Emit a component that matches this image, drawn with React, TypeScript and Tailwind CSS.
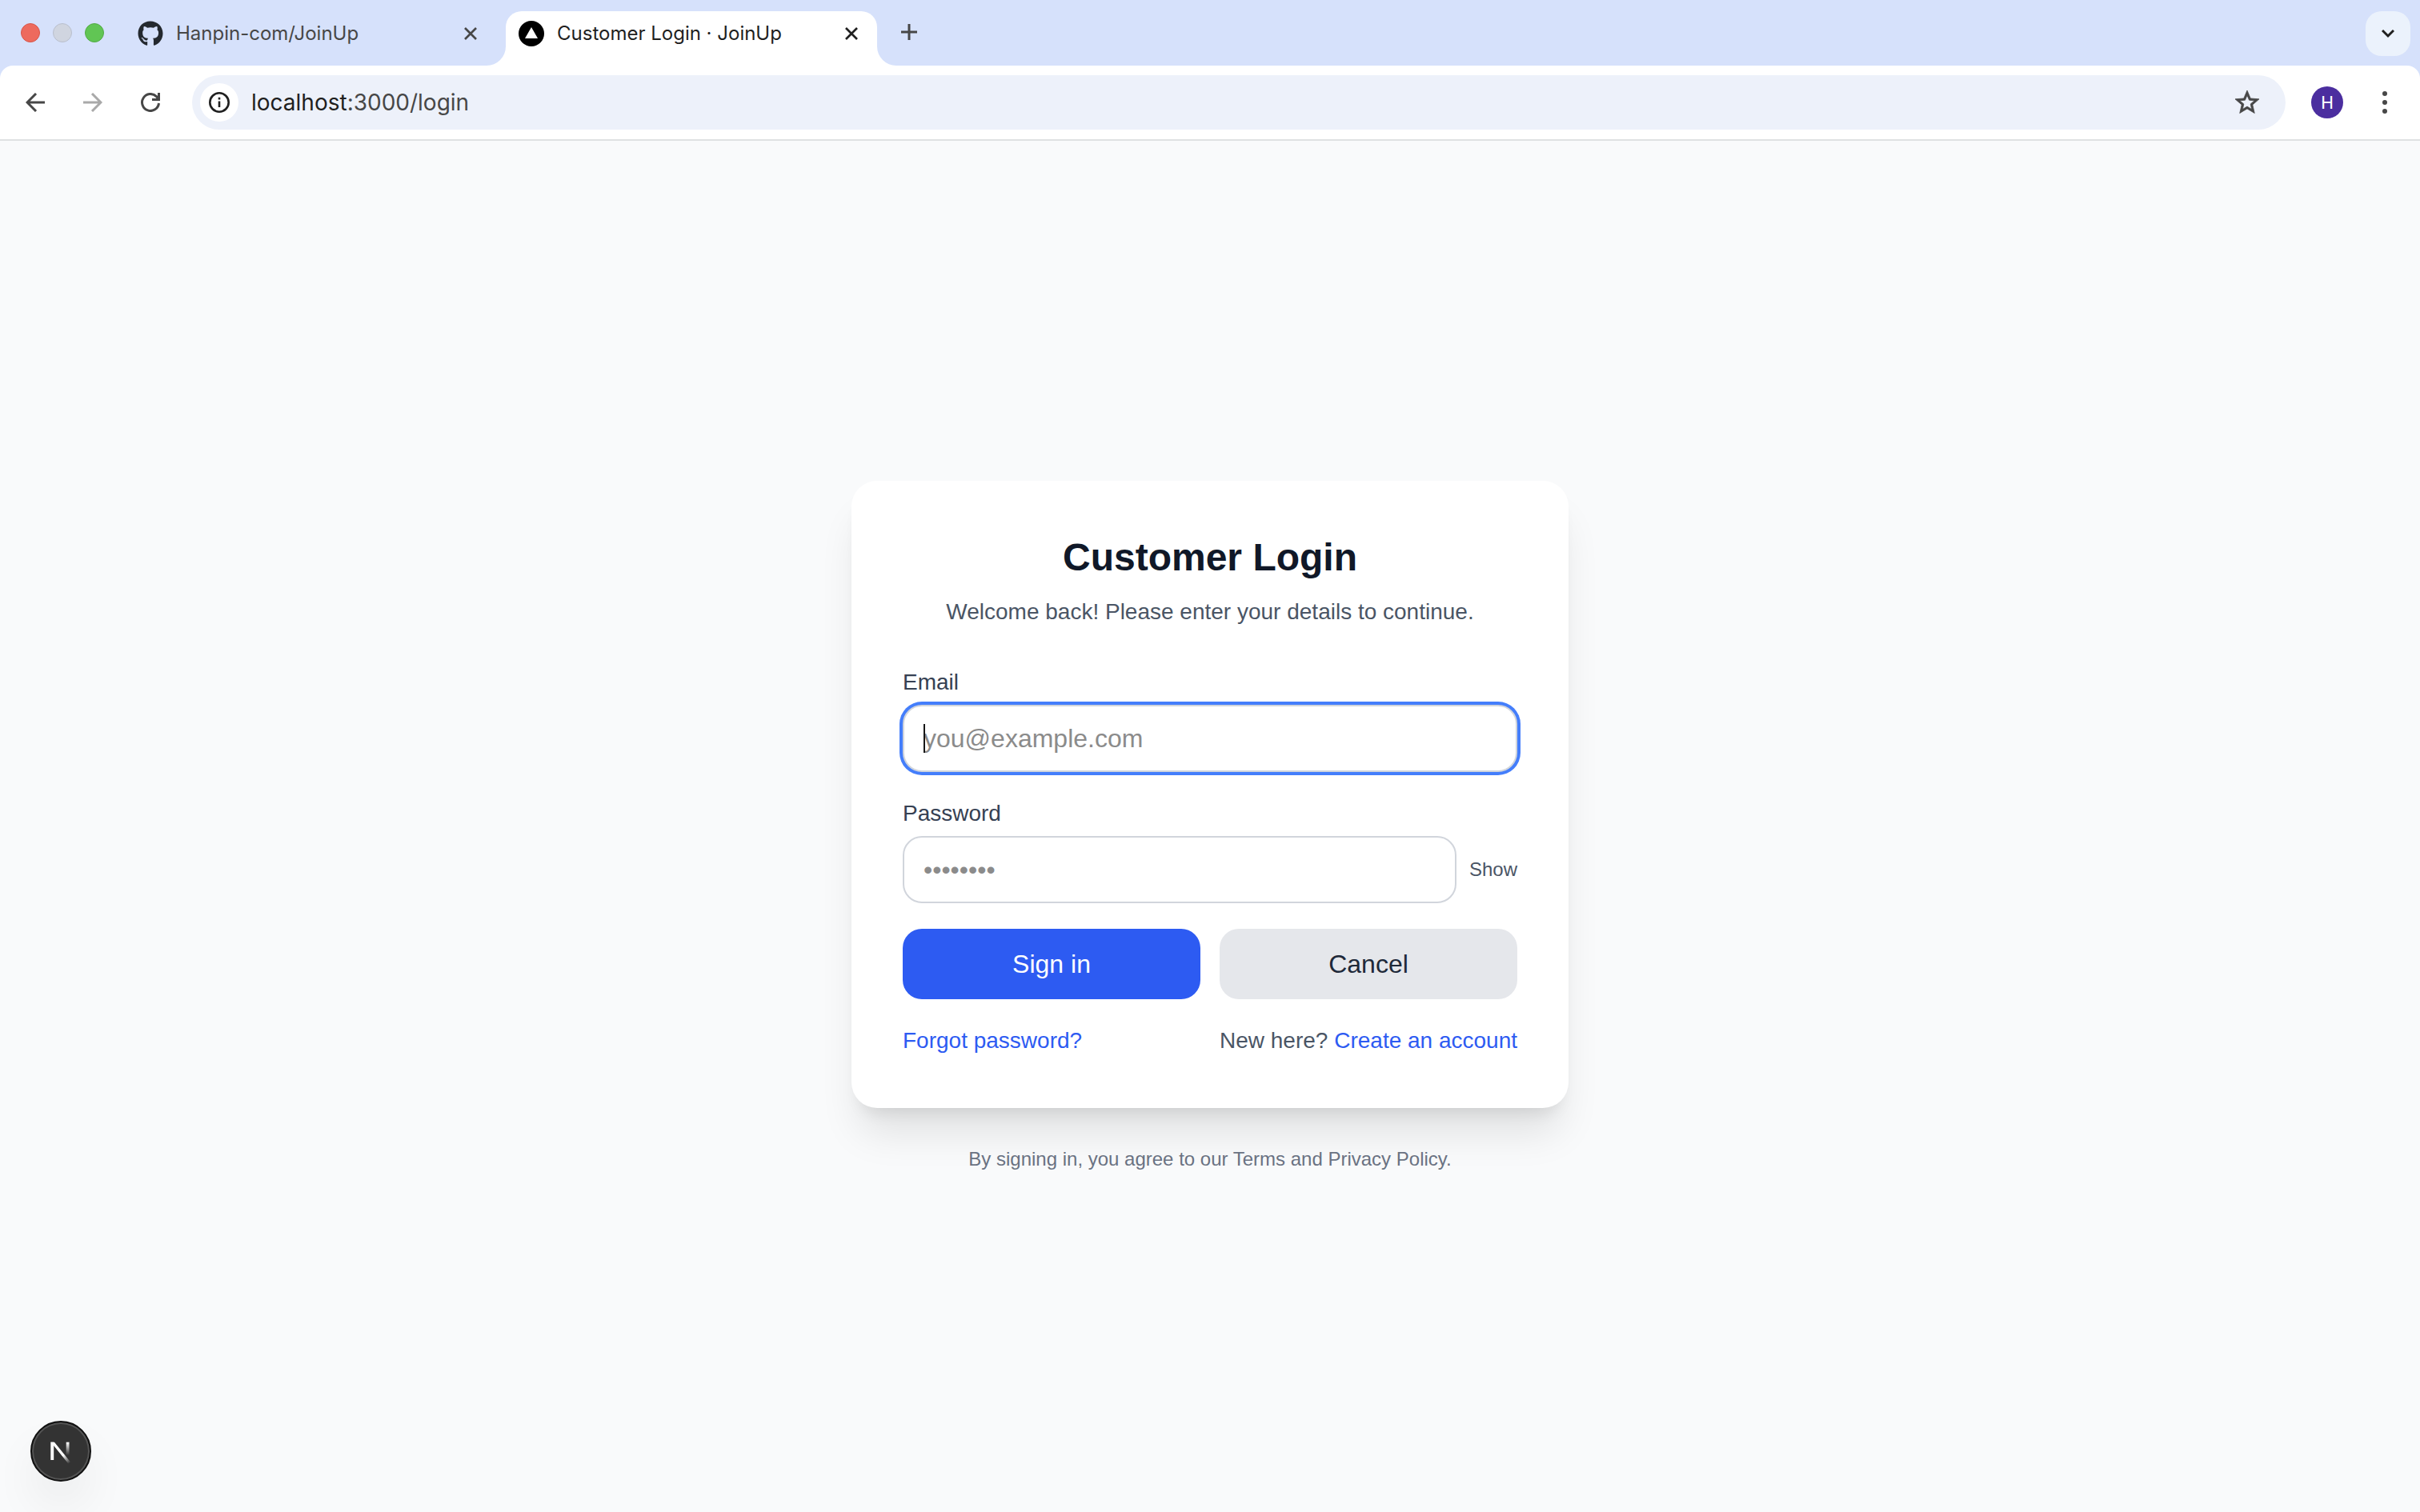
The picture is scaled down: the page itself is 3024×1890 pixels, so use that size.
import type { ReactNode } from "react";
import { FaGithub } from "react-icons/fa";

const iconButton =
  "flex h-12 w-12 shrink-0 items-center justify-center rounded-full";

function CloseIcon() {
  return (
    <svg viewBox="0 0 16 16" className="h-4 w-4" fill="none" stroke="currentColor" strokeWidth="2.700" aria-hidden="true">
      <path d="M1 1 15 15M15 1 1 15" />
    </svg>
  );
}

function TrafficLights() {
  return (
    <div className="flex gap-4 pl-[26px]" aria-label="Window controls">
      <button aria-label="Close window" className="h-6 w-6 rounded-full border border-[#d85548] bg-[#ed6a5e]" />
      <button aria-label="Minimize window" className="h-6 w-6 rounded-full border border-[#b9bfcd] bg-[#d0d5e0]" />
      <button aria-label="Zoom window" className="h-6 w-6 rounded-full border border-[#52ab44] bg-[#61c554]" />
    </div>
  );
}

function Flare({ side }: { side: "left" | "right" }) {
  return (
    <svg
      viewBox="0 0 24 24"
      className={side === "left" ? "absolute right-full bottom-0 h-6 w-6" : "absolute bottom-0 left-full h-6 w-6"}
      aria-hidden="true"
    >
      <path d={side === "left" ? "M24 0V24H0A24 24 0 0 0 24 0Z" : "M0 0V24H24A24 24 0 0 1 0 0Z"} fill="#fff" />
    </svg>
  );
}

function Tab({ title, icon, active = false }: { title: string; icon: ReactNode; active?: boolean }) {
  return (
    <div
      className={
        active
          ? "relative flex h-full w-[464px] items-center rounded-t-[20px] bg-white pr-6 pb-3 pl-4 text-[#1f1f1f]"
          : "flex h-full w-[476px] items-center pr-9 pb-3 pl-4 text-[#474747]"
      }
    >
      {active && <Flare side="left" />}
      {icon}
      <span className="ml-4 flex-1 truncate text-2xl">{title}</span>
      <button aria-label={"Close " + title} className="flex h-4 w-4 items-center justify-center">
        <CloseIcon />
      </button>
      {active && <Flare side="right" />}
    </div>
  );
}

function TabStrip() {
  return (
    <div className="flex h-[82px] items-stretch pt-[14px] pr-3">
      <div className="flex items-center pb-[14px]">
        <TrafficLights />
      </div>
      <div className="ml-[26px] flex">
        <Tab title="Hanpin-com/JoinUp" icon={<FaGithub className="h-8 w-8 text-[#24292f]" />} />
        <Tab
          active
          title="Customer Login · JoinUp"
          icon={
            <svg viewBox="0 0 32 32" className="h-8 w-8" aria-hidden="true">
              <circle cx="16" cy="16" r="16" />
              <path d="M16 8 24 22H8Z" fill="#fff" />
            </svg>
          }
        />
      </div>
      <button aria-label="New tab" className="ml-[30px] flex h-[52px] items-center text-[#474747]">
        <svg viewBox="0 0 20 20" className="h-5 w-5" fill="none" stroke="currentColor" strokeWidth="3" aria-hidden="true">
          <path d="M10 0V20M0 10H20" />
        </svg>
      </button>
      <button
        aria-label="Search tabs"
        className="ml-auto flex h-14 w-14 items-center justify-center rounded-[20px] bg-[#ebf2fc] text-[#1f1f1f]"
      >
        <svg viewBox="0 0 16 16" className="h-4 w-4" fill="none" stroke="currentColor" strokeWidth="3" aria-hidden="true">
          <path d="M1 4 8 11 15 4" />
        </svg>
      </button>
    </div>
  );
}

function Toolbar() {
  return (
    <div className="flex h-[94px] items-center rounded-t-2xl border-b-2 border-[#dfe1e2] bg-white pr-6 pl-5 text-[#474747]">
      <div className="flex gap-6">
        <button aria-label="Back" className={iconButton}>
          <svg viewBox="0 0 24 24" className="h-6 w-6" fill="none" stroke="currentColor" strokeWidth="3" aria-hidden="true">
            <path d="M24 12H2M13 1 2 12 13 23" />
          </svg>
        </button>
        <button aria-label="Forward" disabled className={iconButton + " text-[#a9a9a9]"}>
          <svg viewBox="0 0 24 24" className="h-6 w-6" fill="none" stroke="currentColor" strokeWidth="3" aria-hidden="true">
            <path d="M0 12H22M11 1 22 12 11 23" />
          </svg>
        </button>
        <button aria-label="Reload" className={iconButton}>
          <svg viewBox="0 0 24 24" className="h-6 w-6" fill="none" stroke="currentColor" strokeWidth="3" aria-hidden="true">
            <path d="M22.500 13A10.500 10.500 0 1 1 19.500 4.600L22 8" />
            <path d="M22.500 0V8.500H14" />
          </svg>
        </button>
      </div>
      <div className="ml-7 flex h-[68px] flex-1 items-center rounded-full bg-[#edf1fa] pr-[24px] pl-[10px]">
        <button aria-label="View site information" className={iconButton + " bg-white text-[#1f1f1f]"}>
          <svg viewBox="0 0 26 26" className="h-[26px] w-[26px]" fill="none" stroke="currentColor" strokeWidth="2.600" aria-hidden="true">
            <circle cx="13" cy="13" r="11.700" />
            <path d="M13 11.500V19M13 6.800V9.400" />
          </svg>
        </button>
        <div className="ml-4 flex-1 text-[28px]">
          <span className="text-[#1f1f1f]">localhost</span>:3000/login
        </div>
        <button aria-label="Bookmark this tab" className={iconButton}>
          <svg viewBox="0 0 24 24" className="h-9 w-9" fill="currentColor" stroke="currentColor" strokeWidth="0.500" aria-hidden="true">
            <path d="M22 9.240l-7.190-.620L12 2 9.190 8.630 2 9.240l5.460 4.730L5.820 21 12 17.270 18.180 21l-1.630-7.030L22 9.240zM12 15.400l-3.760 2.270 1-4.280-3.320-2.880 4.380-.380L12 6.100l1.710 4.040 4.380.380-3.320 2.880 1 4.280L12 15.400z" />
          </svg>
        </button>
      </div>
      <button
        aria-label="Profile"
        className="ml-8 flex h-10 w-10 items-center justify-center rounded-full bg-[#4b2e9f] font-[Roboto] text-[22px] text-white"
      >
        H
      </button>
      <button aria-label="Menu" className="ml-8 flex h-12 w-10 items-center justify-center">
        <svg viewBox="0 0 6 28" className="h-7 w-[6px]" fill="currentColor" aria-hidden="true">
          <circle cx="3" cy="3" r="3" />
          <circle cx="3" cy="14" r="3" />
          <circle cx="3" cy="25" r="3" />
        </svg>
      </button>
    </div>
  );
}

const field =
  "h-[84px] w-full rounded-3xl border-2 border-gray-300 bg-white px-6 text-[32px] leading-[48px] caret-transparent outline-none placeholder:text-[#8b8b8b]";

function LoginCard() {
  return (
    <section className="w-full rounded-[32px] bg-white p-16 shadow-[0_40px_50px_-10px_rgba(0,0,0,0.1),0_16px_20px_-12px_rgba(0,0,0,0.1)]">
      <h1 className="text-center text-5xl leading-[64px] font-bold text-gray-900">Customer Login</h1>
      <p className="mt-4 text-center text-[28px] leading-10 text-gray-600">
        Welcome back! Please enter your details to continue.
      </p>
      <form className="mt-12 flex flex-col gap-8" onSubmit={(e) => e.preventDefault()}>
        <div>
          <label htmlFor="email" className="block text-[28px] leading-10 text-gray-700">
            Email
          </label>
          <div className="relative mt-2">
            <input
              id="email"
              type="email"
              placeholder="you@example.com"
              className={field + " block ring-4 ring-[#447efb]"}
            />
            <span className="absolute top-6 left-[26px] h-9 w-[2px] bg-[#171717]" aria-hidden="true" />
          </div>
        </div>
        <div>
          <label htmlFor="password" className="block text-[28px] leading-10 text-gray-700">
            Password
          </label>
          <div className="mt-2 flex items-center gap-4">
            <input id="password" type="password" placeholder="••••••••" className={field + " min-w-0 flex-1"} />
            <button type="button" className="text-2xl text-gray-600">
              Show
            </button>
          </div>
        </div>
        <div className="grid grid-cols-2 gap-6 text-[32px] leading-[48px]">
          <button type="submit" className="rounded-3xl bg-[#2d5bf2] py-5 text-white">
            Sign in
          </button>
          <button type="button" className="rounded-3xl bg-gray-200 py-5 text-gray-800">
            Cancel
          </button>
        </div>
        <div className="flex justify-between text-[28px] leading-10 text-gray-600">
          <a href="#forgot" className="text-[#2d5bf2]">
            Forgot password?
          </a>
          <span>
            New here?{" "}
            <a href="#register" className="text-[#2d5bf2]">
              Create an account
            </a>
          </span>
        </div>
      </form>
    </section>
  );
}

function DevBadge() {
  return (
    <button
      aria-label="Open developer tools"
      className="fixed bottom-[38px] left-[38px] flex h-[76px] w-[76px] items-center justify-center rounded-full border-2 border-[#111] bg-[#333] shadow-[inset_0_0_0_2px_#545454,0_32px_64px_-16px_rgba(0,0,0,0.16)]"
    >
      <svg viewBox="0 0 32 32" className="h-8 w-8" fill="none" aria-hidden="true">
        <defs>
          <linearGradient id="stem" x1="0" y1="5" x2="0" y2="21" gradientUnits="userSpaceOnUse">
            <stop stopColor="#fff" />
            <stop offset="1" stopColor="#fff" stopOpacity="0" />
          </linearGradient>
          <linearGradient id="slash" x1="19" y1="21" x2="27" y2="31" gradientUnits="userSpaceOnUse">
            <stop stopColor="#fff" />
            <stop offset="1" stopColor="#fff" stopOpacity="0" />
          </linearGradient>
        </defs>
        <path d="M3.300 4.700H7.200V27H3.300Z" fill="#fff" />
        <path d="M3.300 4.700H8L28.200 29.700 25.500 31.700 5.300 6.700Z" fill="url(#slash)" />
        <path d="M22.700 4.700H26.500V21H22.700Z" fill="url(#stem)" />
      </svg>
    </button>
  );
}

export default function App() {
  return (
    <div className="flex min-h-screen flex-col bg-gray-50 font-['Liberation_Sans',Arial,sans-serif]">
      <header className="bg-[#d6e1fb] font-[Inter,sans-serif]">
        <TabStrip />
        <Toolbar />
      </header>
      <main className="flex flex-1 flex-col items-center justify-center">
        <div className="w-full max-w-[896px]">
          <LoginCard />
          <p className="mt-12 text-center text-2xl leading-8 text-gray-500">
            By signing in, you agree to our Terms and Privacy Policy.
          </p>
        </div>
      </main>
      <DevBadge />
    </div>
  );
}
